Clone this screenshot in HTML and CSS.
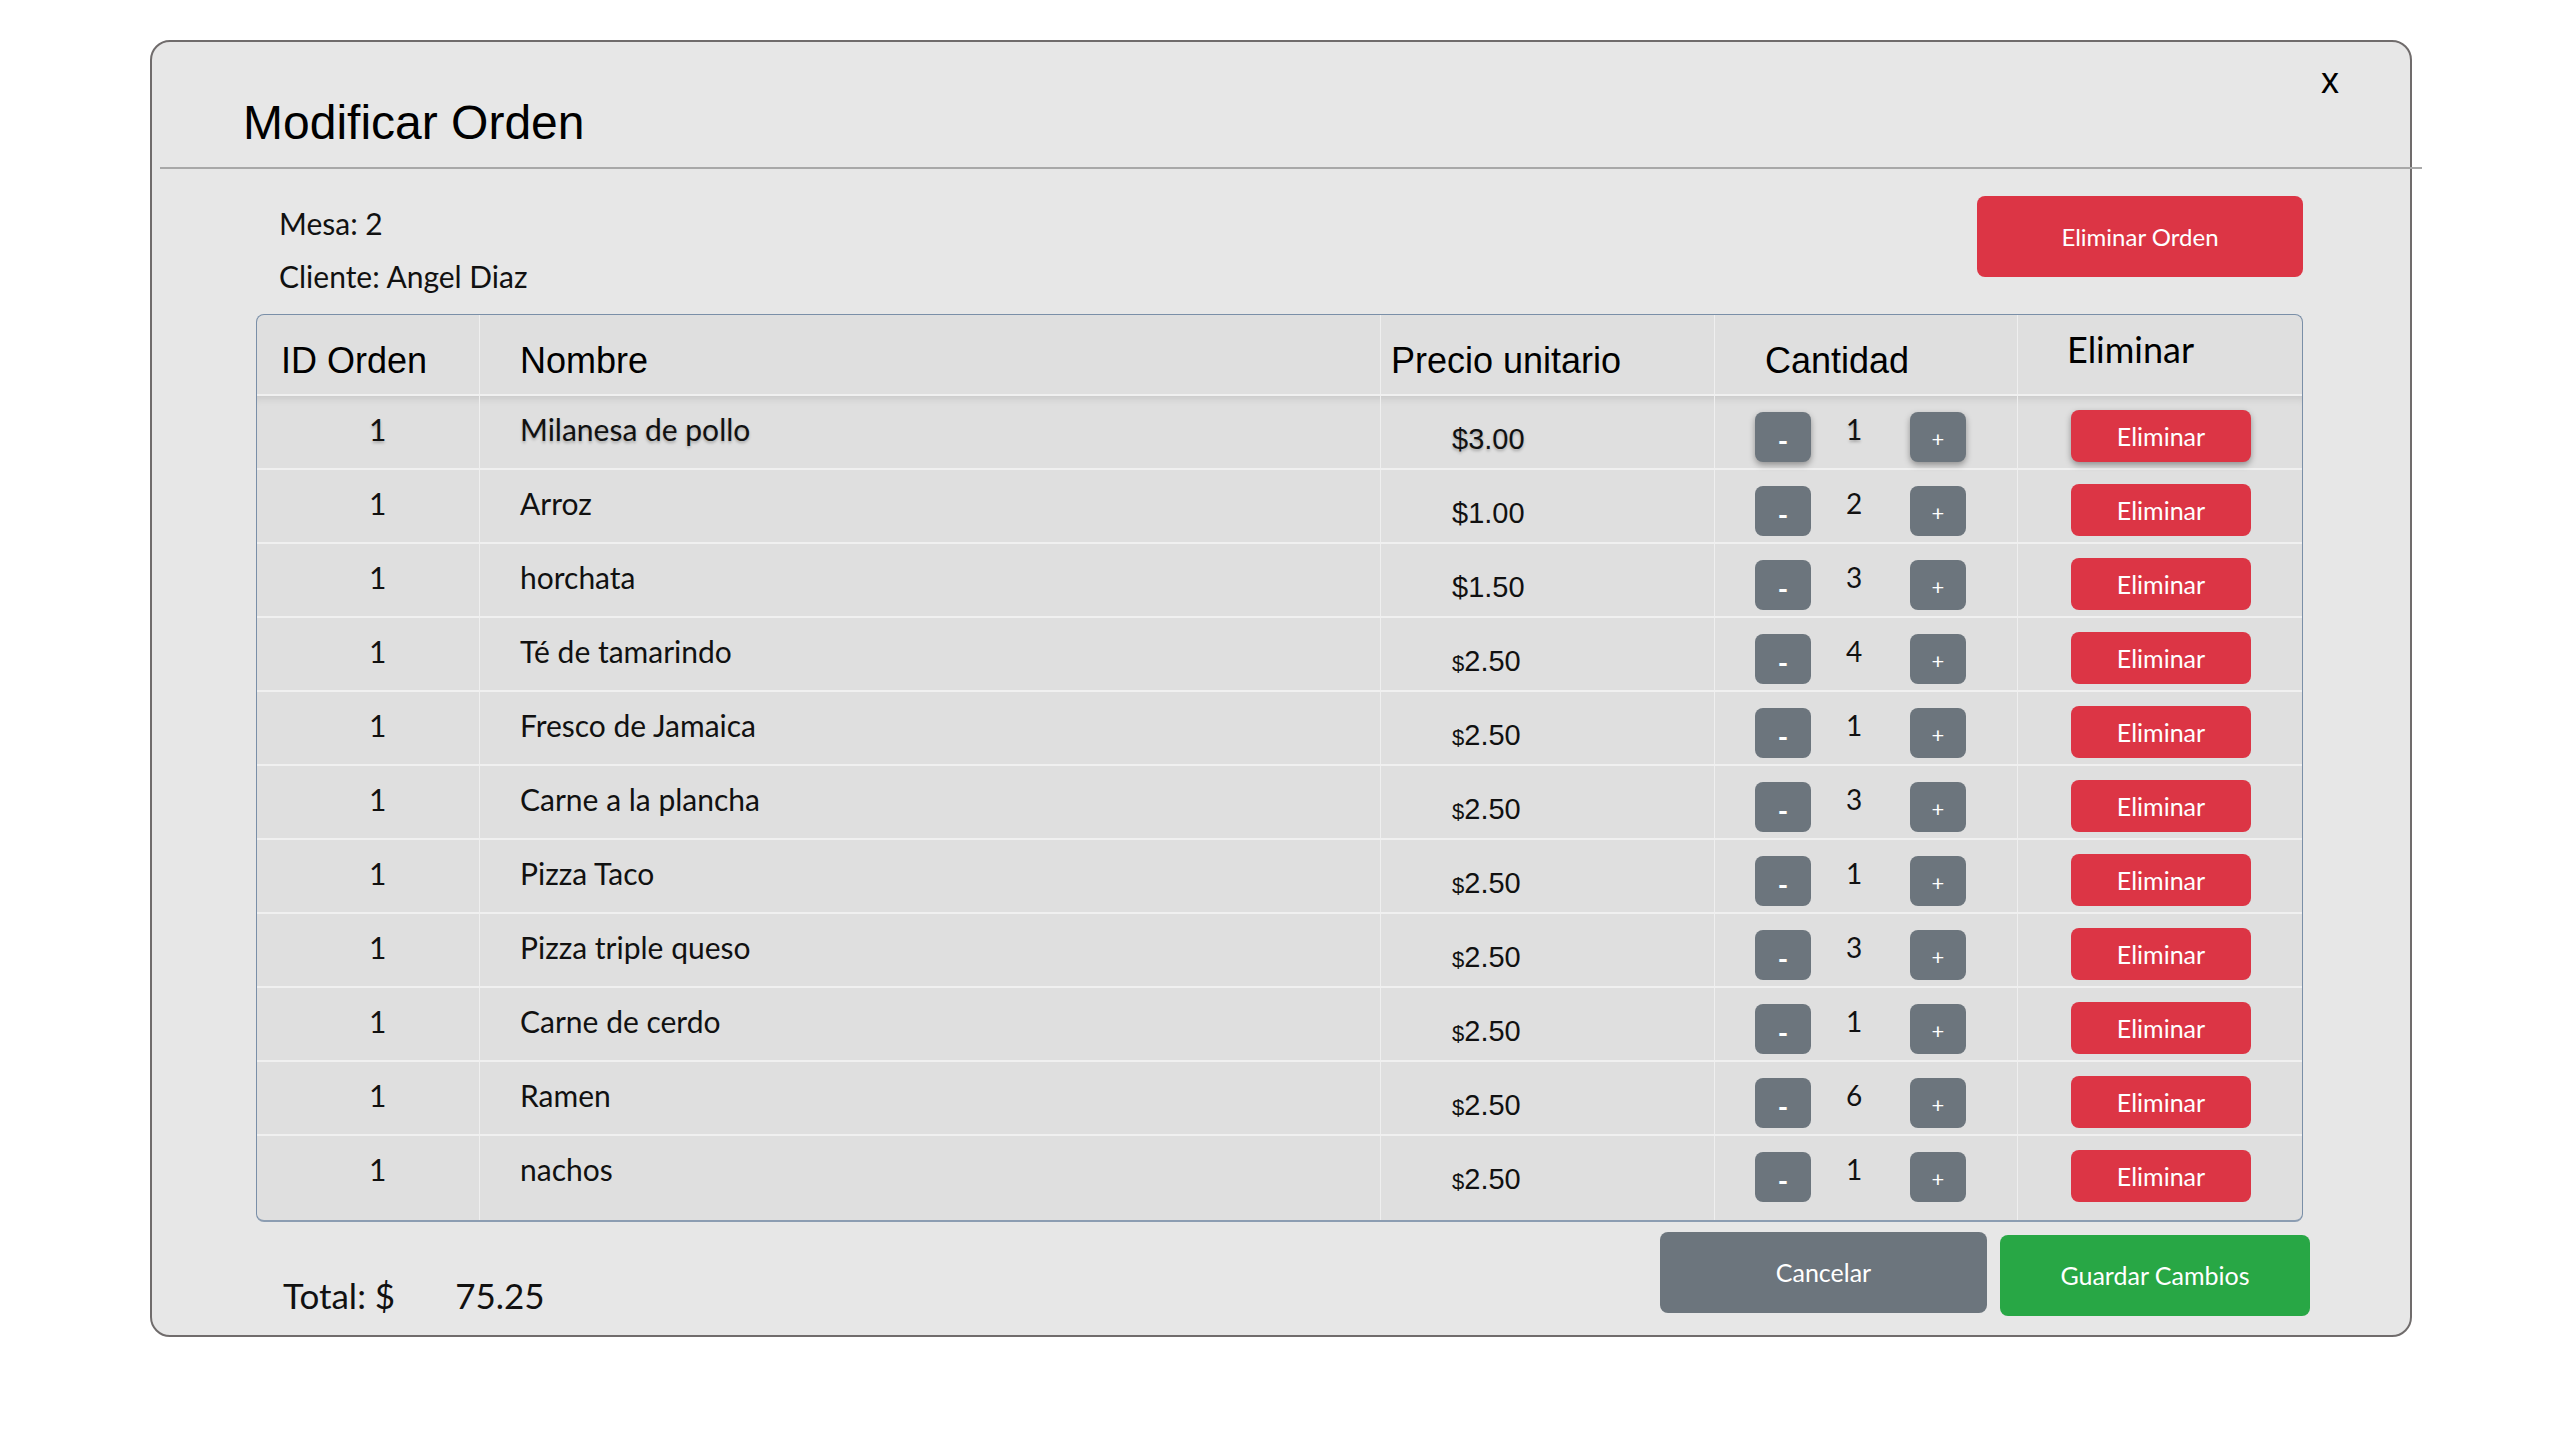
FILE: index.html
```html
<!DOCTYPE html>
<html lang="es">
<head>
<meta charset="utf-8">
<title>Modificar Orden</title>
<link rel="stylesheet" href="styles.css">
</head>
<body>
<div class="modal">
  <div class="modal-header">
    <h2 class="modal-title">Modificar Orden</h2>
    <span class="close">x</span>
  </div>
  <div class="divider"></div>
  <div class="modal-body">
    <div class="info-row">
      <div class="info">
        <div>Mesa: 2</div>
        <div>Cliente: Angel Diaz</div>
      </div>
      <button class="btn btn-danger btn-lg">Eliminar Orden</button>
    </div>

    <div class="table">
      <div class="row head">
        <div class="cell c-id">ID Orden</div>
        <div class="cell c-name">Nombre</div>
        <div class="cell c-price">Precio unitario</div>
        <div class="cell c-qty">Cantidad</div>
        <div class="cell c-del">Eliminar</div>
      </div>

      <div class="row hover">
        <div class="cell c-id">1</div>
        <div class="cell c-name">Milanesa de pollo</div>
        <div class="cell c-price">$3.00</div>
        <div class="cell c-qty"><button class="step minus">-</button><span class="qty">1</span><button class="step">+</button></div>
        <div class="cell c-del"><button class="btn btn-danger btn-sm">Eliminar</button></div>
      </div>
      <div class="row">
        <div class="cell c-id">1</div>
        <div class="cell c-name">Arroz</div>
        <div class="cell c-price">$1.00</div>
        <div class="cell c-qty"><button class="step minus">-</button><span class="qty">2</span><button class="step">+</button></div>
        <div class="cell c-del"><button class="btn btn-danger btn-sm">Eliminar</button></div>
      </div>
      <div class="row">
        <div class="cell c-id">1</div>
        <div class="cell c-name">horchata</div>
        <div class="cell c-price">$1.50</div>
        <div class="cell c-qty"><button class="step minus">-</button><span class="qty">3</span><button class="step">+</button></div>
        <div class="cell c-del"><button class="btn btn-danger btn-sm">Eliminar</button></div>
      </div>
      <div class="row">
        <div class="cell c-id">1</div>
        <div class="cell c-name">Té de tamarindo</div>
        <div class="cell c-price"><span class="cur">$</span>2.50</div>
        <div class="cell c-qty"><button class="step minus">-</button><span class="qty">4</span><button class="step">+</button></div>
        <div class="cell c-del"><button class="btn btn-danger btn-sm">Eliminar</button></div>
      </div>
      <div class="row">
        <div class="cell c-id">1</div>
        <div class="cell c-name">Fresco de Jamaica</div>
        <div class="cell c-price"><span class="cur">$</span>2.50</div>
        <div class="cell c-qty"><button class="step minus">-</button><span class="qty">1</span><button class="step">+</button></div>
        <div class="cell c-del"><button class="btn btn-danger btn-sm">Eliminar</button></div>
      </div>
      <div class="row">
        <div class="cell c-id">1</div>
        <div class="cell c-name">Carne a la plancha</div>
        <div class="cell c-price"><span class="cur">$</span>2.50</div>
        <div class="cell c-qty"><button class="step minus">-</button><span class="qty">3</span><button class="step">+</button></div>
        <div class="cell c-del"><button class="btn btn-danger btn-sm">Eliminar</button></div>
      </div>
      <div class="row">
        <div class="cell c-id">1</div>
        <div class="cell c-name">Pizza Taco</div>
        <div class="cell c-price"><span class="cur">$</span>2.50</div>
        <div class="cell c-qty"><button class="step minus">-</button><span class="qty">1</span><button class="step">+</button></div>
        <div class="cell c-del"><button class="btn btn-danger btn-sm">Eliminar</button></div>
      </div>
      <div class="row">
        <div class="cell c-id">1</div>
        <div class="cell c-name">Pizza triple queso</div>
        <div class="cell c-price"><span class="cur">$</span>2.50</div>
        <div class="cell c-qty"><button class="step minus">-</button><span class="qty">3</span><button class="step">+</button></div>
        <div class="cell c-del"><button class="btn btn-danger btn-sm">Eliminar</button></div>
      </div>
      <div class="row">
        <div class="cell c-id">1</div>
        <div class="cell c-name">Carne de cerdo</div>
        <div class="cell c-price"><span class="cur">$</span>2.50</div>
        <div class="cell c-qty"><button class="step minus">-</button><span class="qty">1</span><button class="step">+</button></div>
        <div class="cell c-del"><button class="btn btn-danger btn-sm">Eliminar</button></div>
      </div>
      <div class="row">
        <div class="cell c-id">1</div>
        <div class="cell c-name">Ramen</div>
        <div class="cell c-price"><span class="cur">$</span>2.50</div>
        <div class="cell c-qty"><button class="step minus">-</button><span class="qty">6</span><button class="step">+</button></div>
        <div class="cell c-del"><button class="btn btn-danger btn-sm">Eliminar</button></div>
      </div>
      <div class="row last">
        <div class="cell c-id">1</div>
        <div class="cell c-name">nachos</div>
        <div class="cell c-price"><span class="cur">$</span>2.50</div>
        <div class="cell c-qty"><button class="step minus">-</button><span class="qty">1</span><button class="step">+</button></div>
        <div class="cell c-del"><button class="btn btn-danger btn-sm">Eliminar</button></div>
      </div>
    </div>

    <div class="footer">
      <div class="total">Total: $<span class="amount">75.25</span></div>
      <button class="btn btn-secondary btn-lg btn-cancel">Cancelar</button>
      <button class="btn btn-success btn-lg btn-save">Guardar Cambios</button>
    </div>
  </div>
</div>
</body>
</html>
```

FILE: styles.css
```css
* { box-sizing: border-box; }

body {
  margin: 0;
  background: #ffffff;
  font-family: "Lato", "Open Sans", sans-serif;
  color: #111;
}

.modal {
  margin: 40px 0 0 150px;
  width: 2262px;
  height: 1297px;
  background: #e7e7e7;
  border: 2px solid #706c6c;
  border-radius: 20px;
}

.modal-header {
  display: flex;
  justify-content: space-between;
  align-items: flex-start;
  padding: 21px 71px 17px 91px;
}

.modal-title {
  margin: 32px 0 0;
  font-family: "Liberation Sans", Arial, sans-serif;
  font-weight: 400;
  font-size: 48px;
  line-height: 55px;
  color: #000;
}

.close {
  font-family: "Liberation Sans", Arial, sans-serif;
  font-size: 36px;
  line-height: 36px;
  color: #000;
}

.divider {
  height: 2px;
  background: #a8a8a8;
  margin: 0 -12px 0 8px;
}

.modal-body {
  padding: 0 107px 0 104px;
}

.info-row {
  display: flex;
  justify-content: space-between;
  align-items: flex-start;
  margin-top: 27px;
}

.info {
  padding: 1px 0 0 23px;
  font-size: 30px;
  line-height: 53px;
}

.btn {
  border: none;
  margin: 0;
  padding: 0;
  color: #fff;
  font-family: "Lato", "Open Sans", sans-serif;
  text-align: center;
  cursor: pointer;
}

.btn-danger { background: #dc3545; }
.btn-secondary { background: #6c757d; }
.btn-success { background: #28a745; }

.btn-lg {
  height: 81px;
  border-radius: 8px;
  font-size: 25px;
  line-height: 81px;
}

.info-row .btn-lg {
  width: 326px;
  font-size: 24px;
}

/* table */
.table {
  margin-top: 11px;
  background: #dfdfdf;
  border: 1px solid #7a8fa8;
  border-bottom: 2px solid #8c9db2;
  border-radius: 8px;
  overflow: hidden;
}

.row {
  display: grid;
  grid-template-columns: 223px 901px 334px 303px 1fr;
  height: 74px;
  border-bottom: 2px solid #f0f0f0;
}

.row.head { height: 81px; }
.row.last { height: 84px; border-bottom: none; }

.cell {
  border-right: 1px solid #efefef;
  padding-top: 15px;
  font-size: 30px;
  line-height: 36px;
  white-space: nowrap;
}

.cell.c-del { border-right: none; }

.c-id { padding-left: 112px; }
.c-name { padding-left: 40px; }

.c-price {
  padding-left: 71px;
  padding-top: 26px;
  font-family: "Liberation Sans", Arial, sans-serif;
  font-size: 29px;
  line-height: 34px;
}

.cur { font-size: 22px; }

.c-qty {
  display: flex;
  align-items: flex-start;
  padding: 16px 0 0 40px;
}

.c-del { padding: 14px 0 0 53px; }

.head .cell {
  font-family: "Liberation Sans", Arial, sans-serif;
  font-size: 36px;
  line-height: 40px;
  padding-top: 26px;
  color: #000;
}

.head .c-id { padding-left: 24px; }
.head .c-name { padding-left: 40px; }
.head .c-price { padding-left: 10px; }
.head .c-qty { display: block; padding-left: 50px; }
.head .c-del {
  font-family: "Lato", "Open Sans", sans-serif;
  padding-top: 14px;
  padding-left: 49px;
}

.step {
  width: 56px;
  height: 50px;
  border: none;
  border-radius: 8px;
  background: #6c757d;
  color: #fff;
  font-family: "Lato", "Open Sans", sans-serif;
  font-size: 22px;
  line-height: 54px;
  padding: 0;
}

.step.minus {
  font-size: 28px;
  font-weight: 700;
  line-height: 56px;
}

.qty {
  width: 99px;
  padding-left: 35px;
  font-size: 28px;
  line-height: 34px;
}

.btn-sm {
  width: 180px;
  height: 52px;
  border-radius: 8px;
  font-size: 25px;
  line-height: 52px;
}

.row.hover {
  box-shadow: inset 0 8px 8px -6px rgba(0, 0, 0, 0.12);
}
.row.hover .cell { text-shadow: 0 2px 3px rgba(0, 0, 0, 0.25); }
.row.hover .step,
.row.hover .btn-sm { box-shadow: 0 3px 6px rgba(0, 0, 0, 0.35); text-shadow: none; }

/* footer */
.footer {
  display: flex;
  align-items: flex-start;
  margin: 10px -7px 0 0;
}

.total {
  margin: 42px auto 0 0;
  padding-left: 27px;
  font-size: 35px;
  line-height: 42px;
}

.amount { margin-left: 60px; }

.btn-cancel { width: 327px; }
.btn-save { width: 310px; margin: 3px 0 0 13px; }
```
